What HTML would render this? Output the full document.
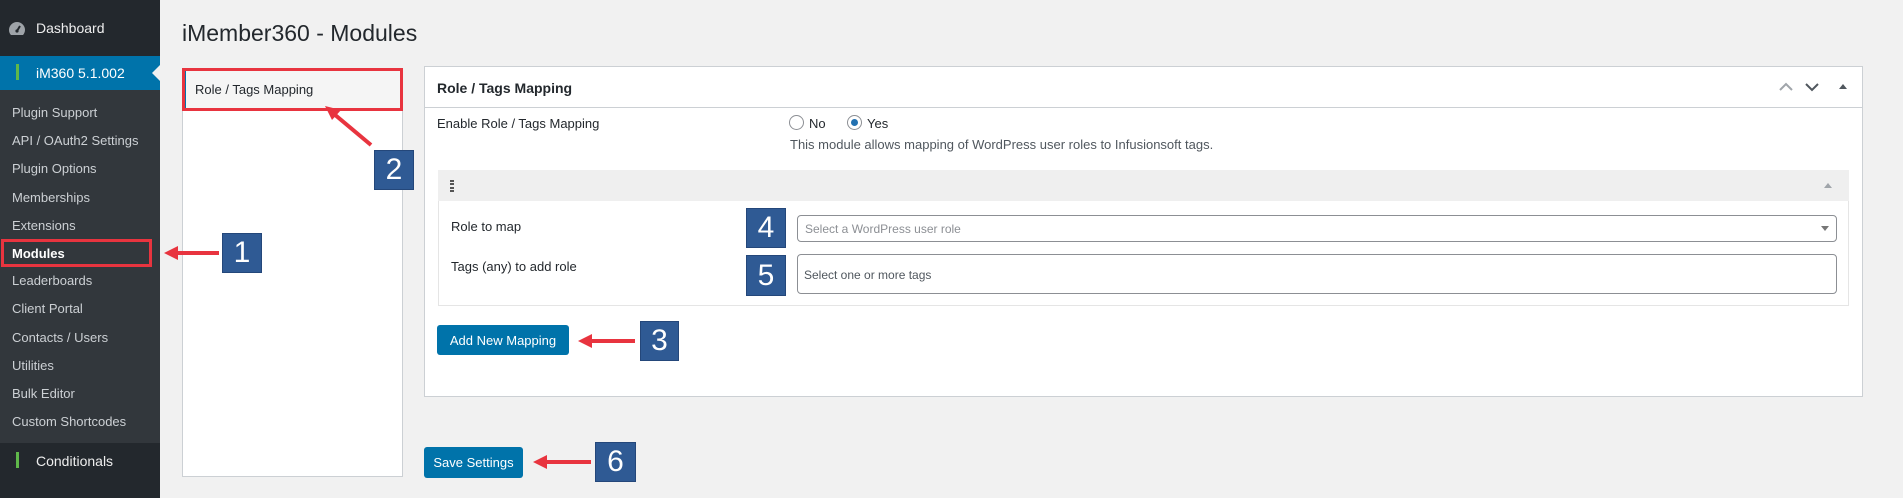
<!DOCTYPE html>
<html><head><style>
*{box-sizing:border-box;margin:0;padding:0}
body{width:1903px;height:498px;background:#f1f1f1;font-family:"Liberation Sans",sans-serif;font-size:13px;color:#23282d;position:relative;overflow:hidden}
.a{position:absolute}
#sb{left:0;top:0;width:160px;height:498px;background:#23282d}
#sub{left:0;top:90px;width:160px;height:353px;background:#32373c}
.si{position:absolute;left:12px;color:#ccd0d4;font-size:13px}
.badge{position:absolute;background:#2f5a94;color:#fff;font-size:30px;display:flex;align-items:center;justify-content:center;border:1px solid #24477a}
.btn{position:absolute;background:#0073aa;color:#fff;font-size:13px;border-radius:3px;display:flex;align-items:center;justify-content:center}
</style></head><body>
<div id="sb" class="a"></div>
<div id="sub" class="a"></div>
<svg class="a" style="left:8px;top:21px" width="18" height="16" viewBox="0 0 18 16"><path d="M9 1a8 8 0 0 0-8 8c0 2 .7 3.7 2 5h12a8 8 0 0 0 2-5 8 8 0 0 0-8-8z" fill="#9ea3a8"/><path d="M9 10l3-5" stroke="#23282d" stroke-width="2"/><circle cx="9" cy="10" r="1.6" fill="#23282d"/></svg>
<div class="a" style="left:36px;top:20px;color:#eee;font-size:14px">Dashboard</div>
<div class="a" style="left:0;top:56px;width:160px;height:34px;background:#0073aa"></div>
<div class="a" style="left:16px;top:64px;width:3px;height:16px;background:#5fb84a"></div>
<div class="a" style="left:36px;top:65px;color:#fff;font-size:14px">iM360 5.1.002</div>
<div class="a" style="left:152px;top:65px;width:0;height:0;border-top:8px solid transparent;border-bottom:8px solid transparent;border-right:8px solid #f1f1f1"></div>
<div class="si" style="top:105px">Plugin Support</div>
<div class="si" style="top:133px">API / OAuth2 Settings</div>
<div class="si" style="top:161px">Plugin Options</div>
<div class="si" style="top:190px">Memberships</div>
<div class="si" style="top:218px">Extensions</div>
<div class="si" style="top:246px;color:#fff;font-weight:bold">Modules</div>
<div class="si" style="top:273px">Leaderboards</div>
<div class="si" style="top:301px">Client Portal</div>
<div class="si" style="top:330px">Contacts / Users</div>
<div class="si" style="top:358px">Utilities</div>
<div class="si" style="top:386px">Bulk Editor</div>
<div class="si" style="top:414px">Custom Shortcodes</div>
<div class="a" style="left:16px;top:452px;width:3px;height:16px;background:#5fb84a"></div>
<div class="a" style="left:36px;top:453px;color:#eee;font-size:14px">Conditionals</div>
<div class="a" style="left:1px;top:239px;width:151px;height:28px;border:3px solid #e8343f"></div>

<div class="a" style="left:182px;top:20px;font-size:23px;color:#23282d">iMember360 - Modules</div>

<div class="a" style="left:182px;top:68px;width:221px;height:409px;background:#fff;border:1px solid #ccd0d4"></div>
<div class="a" style="left:183px;top:69px;width:219px;height:40px;background:#f5f5f5;border-left:3px solid #0073aa"></div>
<div class="a" style="left:195px;top:82px;font-size:13px">Role / Tags Mapping</div>
<div class="a" style="left:182px;top:68px;width:221px;height:43px;border:3px solid #e8343f"></div>

<div class="a" style="left:424px;top:66px;width:1439px;height:331px;background:#fff;border:1px solid #ccd0d4"></div>
<div class="a" style="left:424px;top:107px;width:1439px;height:1px;background:#ccd0d4"></div>
<div class="a" style="left:437px;top:80px;font-size:14px;font-weight:bold;color:#23282d">Role / Tags Mapping</div>
<svg class="a" style="left:1778px;top:80px" width="80" height="14"><path d="M2 10l6-6 6 6" stroke="#a0a5aa" stroke-width="2" fill="none"/><path d="M28 4l6 6 6-6" stroke="#50575e" stroke-width="2" fill="none"/><path d="M61 9l4-5 4 5z" fill="#50575e"/></svg>
<div class="a" style="left:437px;top:116px">Enable Role / Tags Mapping</div>
<div class="a" style="left:789px;top:115px;width:15px;height:15px;border:1px solid #8c8f94;border-radius:50%;background:#fff"></div>
<div class="a" style="left:809px;top:116px">No</div>
<div class="a" style="left:847px;top:115px;width:15px;height:15px;border:1px solid #8c8f94;border-radius:50%;background:#fff"></div>
<div class="a" style="left:851px;top:119px;width:7px;height:7px;border-radius:50%;background:#2271b1"></div>
<div class="a" style="left:867px;top:116px">Yes</div>
<div class="a" style="left:790px;top:137px;color:#50575e;font-size:13px">This module allows mapping of WordPress user roles to Infusionsoft tags.</div>

<div class="a" style="left:438px;top:170px;width:1411px;height:136px;border:1px solid #e5e5e5;background:#fff"></div>
<div class="a" style="left:438px;top:170px;width:1411px;height:31px;background:#efefef"></div>
<div class="a" style="left:450px;top:180px;width:4px;height:12px;border-left:2px dotted #555;border-right:2px dotted #555"></div>
<svg class="a" style="left:1822px;top:180px" width="12" height="10"><path d="M2 8l4-5 4 5z" fill="#a0a5aa"/></svg>
<div class="a" style="left:451px;top:219px">Role to map</div>
<div class="a" style="left:451px;top:259px">Tags (any) to add role</div>
<div class="a" style="left:797px;top:215px;width:1040px;height:27px;border:1px solid #8c8f94;border-radius:4px;background:#fff"></div>
<div class="a" style="left:805px;top:222px;color:#8c8f94;font-size:12px">Select a WordPress user role</div>
<svg class="a" style="left:1820px;top:225px" width="10" height="8"><path d="M1 1h8l-4 5z" fill="#777"/></svg>
<div class="a" style="left:797px;top:254px;width:1040px;height:40px;border:1px solid #8c8f94;border-radius:4px;background:#fff"></div>
<div class="a" style="left:804px;top:268px;color:#50575e;font-size:12px">Select one or more tags</div>
<div class="badge" style="left:746px;top:208px;width:40px;height:40px">4</div>
<div class="badge" style="left:746px;top:255px;width:40px;height:41px">5</div>

<div class="btn" style="left:437px;top:325px;width:132px;height:30px">Add New Mapping</div>
<div class="btn" style="left:424px;top:447px;width:99px;height:31px">Save Settings</div>

<div class="badge" style="left:222px;top:233px;width:40px;height:40px">1</div>
<div class="badge" style="left:374px;top:150px;width:40px;height:40px">2</div>
<div class="badge" style="left:640px;top:321px;width:39px;height:40px">3</div>
<div class="badge" style="left:595px;top:442px;width:41px;height:40px">6</div>

<svg class="a" style="left:0;top:0" width="1903" height="498">
<g stroke="#e8343f" stroke-width="4" fill="#e8343f">
<line x1="219" y1="253" x2="176" y2="253"/><path d="M164 253l14-7v14z" stroke="none"/>
<line x1="371" y1="145" x2="334" y2="114"/><path d="M325 106l16 4-9 10z" stroke="none"/>
<line x1="635" y1="341" x2="590" y2="341"/><path d="M578 341l14-7v14z" stroke="none"/>
<line x1="591" y1="462" x2="546" y2="462"/><path d="M533 462l14-7v14z" stroke="none"/>
</g></svg>
</body></html>
